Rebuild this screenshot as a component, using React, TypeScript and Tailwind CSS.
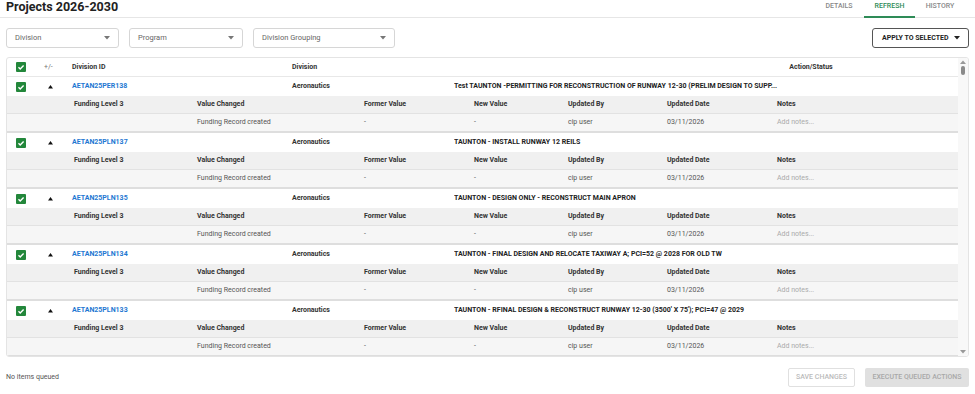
import React from "react";

const rows = [
  { id: "AETAN25PER138", project: "Test TAUNTON -PERMITTING FOR RECONSTRUCTION OF RUNWAY 12-30 (PRELIM DESIGN TO SUPP..." },
  { id: "AETAN25PLN137", project: "TAUNTON - INSTALL RUNWAY 12 REILS" },
  { id: "AETAN25PLN135", project: "TAUNTON - DESIGN ONLY - RECONSTRUCT MAIN APRON" },
  { id: "AETAN25PLN134", project: "TAUNTON - FINAL DESIGN AND RELOCATE TAXIWAY A; PCI=52 @ 2028 FOR OLD TW" },
  { id: "AETAN25PLN133", project: "TAUNTON - RFINAL DESIGN & RECONSTRUCT RUNWAY 12-30 (3500' X 75'); PCI=47 @ 2029" },
];

const Caret = ({ className = "fill-[#777]" }: { className?: string }) => (
  <svg width="6" height="4" viewBox="0 0 6 4" className={className}>
    <path d="M0 0h6L3 3.5z" />
  </svg>
);

const Check = () => (
  <span className="flex h-[10px] w-[10px] items-center justify-center rounded-[1px] bg-[#23873b]">
    <svg width="8" height="8" viewBox="0 0 8 8" fill="none" stroke="white" strokeWidth="1.4">
      <path d="M1.5 4.2l1.7 1.7L6.6 2.4" />
    </svg>
  </span>
);

const Select = ({ label, w }: { label: string; w: string }) => (
  <div className={`flex h-[20px] items-center justify-between rounded-[3px] border border-[#d6d6d6] pl-[8px] pr-[8px] ${w}`}>
    <span className="text-[7.5px] text-[#666]">{label}</span>
    <Caret />
  </div>
);

const App = () => {
  return (
    <div className="h-[394px] w-[975px] overflow-hidden bg-white px-[6px] font-['Roboto',sans-serif] text-[#333]">
      {/* top bar */}
      <div className="-mx-[6px] flex h-[18px] items-start justify-between border-b border-[#e6e6e6] px-[6px]">
        <h1 className="text-[12.5px] font-bold leading-[13px] text-[#222]">Projects 2026-2030</h1>
        <div className="flex h-[18px] pr-[4px] text-[7px] font-medium uppercase">
          <div className="flex w-[50px] justify-center pt-[1px] text-[#888]">Details</div>
          <div className="flex w-[51px] justify-center border-b-2 border-[#2e8b57] pt-[1px] text-[#2e8b57]">Refresh</div>
          <div className="flex w-[50px] justify-center pt-[1px] text-[#888]">History</div>
        </div>
      </div>

      {/* filters */}
      <div className="mt-[10px] flex items-center justify-between">
        <div className="flex gap-[10px]">
          <Select label="Division" w="w-[113px]" />
          <Select label="Program" w="w-[114px]" />
          <Select label="Division Grouping" w="w-[142px]" />
        </div>
        <button className="flex h-[20px] w-[97px] items-center justify-between rounded-[3px] border border-[#555] pl-[9px] pr-[8px] text-[7px] font-bold text-[#222]">
          APPLY TO SELECTED
          <Caret className="fill-[#222]" />
        </button>
      </div>

      {/* table */}
      <div className="mt-[9px] flex h-[300px] overflow-hidden rounded-[3px] border border-[#e4e4e4] text-[7px]">
        <div className="flex-1">
          <div className="flex h-[19px] items-center border-b border-[#e8e8e8] font-bold text-[#333]">
            <div className="flex w-[65px] items-center pl-[9px]">
              <Check />
              <span className="ml-[18px] font-normal text-[#777]">+/-</span>
            </div>
            <div className="w-[220px]">Division ID</div>
            <div className="w-[162px]">Division</div>
            <div className="w-[322px]" />
            <div className="w-[70px] text-center">Action/Status</div>
          </div>
          {rows.map((r) => (
            <div key={r.id}>
              <div className="flex h-[19px] items-center font-bold">
                <div className="flex w-[65px] items-center pl-[9px]">
                  <Check />
                  <svg width="5" height="4" viewBox="0 0 5 4" className="ml-[22px] fill-[#111]">
                    <path d="M0 3.5h5L2.5 0z" />
                  </svg>
                </div>
                <div className="w-[220px] text-[#1e78d2]">{r.id}</div>
                <div className="w-[162px] text-[#333]">Aeronautics</div>
                <div className="w-[330px] truncate text-[#222]">{r.project}</div>
              </div>
              <div className="flex h-[18px] items-center border-b border-[#e2e2e2] bg-[#f0f0f0] font-bold text-[#333]">
                <div className="w-[67px]" />
                <div className="w-[123px]">Funding Level 3</div>
                <div className="w-[167px]">Value Changed</div>
                <div className="w-[110px]">Former Value</div>
                <div className="w-[94px]">New Value</div>
                <div className="w-[99px]">Updated By</div>
                <div className="w-[110px]">Updated Date</div>
                <div>Notes</div>
              </div>
              <div className="flex h-[19px] items-center border-b-2 border-[#dedede] bg-[#f6f6f6] text-[#555]">
                <div className="w-[190px]" />
                <div className="w-[167px]">Funding Record created</div>
                <div className="w-[110px]">-</div>
                <div className="w-[94px]">-</div>
                <div className="w-[99px]">cip user</div>
                <div className="w-[110px]">03/11/2026</div>
                <div className="text-[#aaa]">Add notes...</div>
              </div>
            </div>
          ))}
        </div>
        {/* scrollbar */}
        <div className="flex w-[10px] flex-col items-center justify-between bg-[#f8f8f8] py-[2px]">
          <div className="flex flex-col items-center">
            <Caret className="rotate-180 fill-[#999]" />
            <div className="mt-[2px] h-[9px] w-[4px] rounded-[2px] bg-[#8a8a8a]" />
          </div>
          <Caret className="fill-[#999]" />
        </div>
      </div>

      {/* footer */}
      <div className="mt-[11px] flex items-center justify-between">
        <span className="text-[7px] text-[#555]">No items queued</span>
        <div className="flex gap-[10px]">
          <button className="h-[19px] w-[67px] rounded-[2px] border border-[#e0e0e0] text-[7px] font-medium text-[#bbb]">
            SAVE CHANGES
          </button>
          <button className="h-[19px] w-[104px] rounded-[2px] bg-[#e0e0e0] text-[7px] font-medium text-[#a8a8a8]">
            EXECUTE QUEUED ACTIONS
          </button>
        </div>
      </div>
    </div>
  );
};

export default App;
